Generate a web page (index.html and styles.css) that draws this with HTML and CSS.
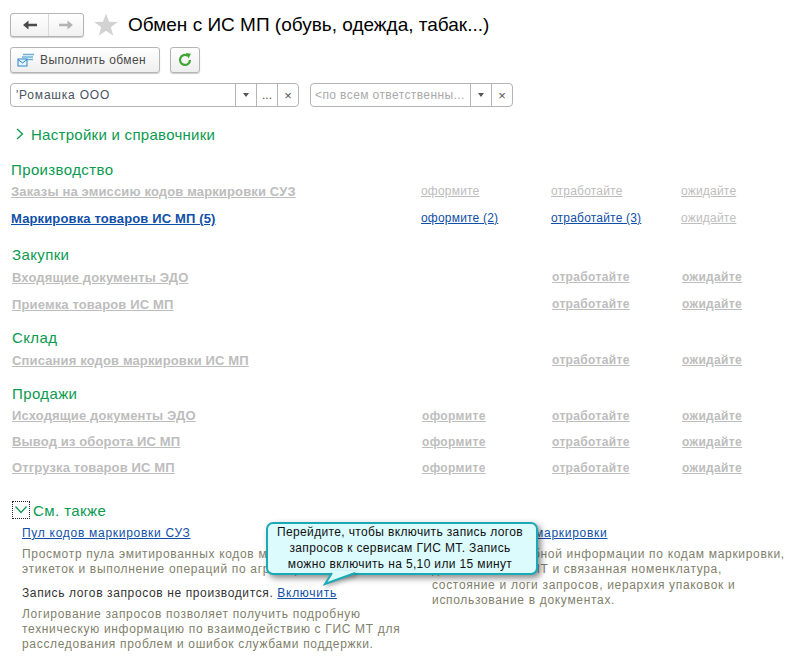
FILE: index.html
```html
<!DOCTYPE html>
<html lang="ru">
<head>
<meta charset="utf-8">
<title>Обмен с ИС МП</title>
<link rel="stylesheet" href="styles.css">
</head>
<body>
<div class="page">
  <header class="titlebar">
    <div class="nav">
      <button class="nav-btn"><svg width="16" height="12" viewBox="0 0 16 12"><path d="M1 6 L6.500 1.500 V4.700 H15 V7.300 H6.500 V10.500 Z" fill="#4a4a4a"/></svg></button>
      <button class="nav-btn"><svg width="16" height="12" viewBox="0 0 16 12"><path d="M15 6 L9.500 1.500 V4.700 H1 V7.300 H9.500 V10.500 Z" fill="#b4b4b4"/></svg></button>
    </div>
    <svg class="star" width="26" height="26" viewBox="0 0 26 26"><path d="M13 1.500 L16 9.800 L24.800 10 L17.800 15.300 L20.300 23.800 L13 18.800 L5.700 23.800 L8.200 15.300 L1.200 10 L10 9.800 Z" fill="#d2d2d2"/></svg>
    <h1>Обмен с ИС МП (обувь, одежда, табак...)</h1>
  </header>

  <div class="commands">
    <button class="btn btn-main">
      <svg width="18" height="17" viewBox="0 0 18 17"><path d="M6 2.500 H17 M5 5 H16 M5 7.500 H16" stroke="#6fb1dc" stroke-width="1.500" fill="none"/><rect x="1" y="7" width="9" height="7" fill="#e8f4fc" stroke="#2e86c8"/><path d="M1 7.500 L5.500 11 L10 7.500" stroke="#2e86c8" fill="none"/></svg>
      <span>Выполнить обмен</span>
    </button>
    <button class="btn btn-icon">
      <svg width="16" height="16" viewBox="0 0 16 16"><path d="M13 8 A5 5 0 1 1 10.800 3.800" stroke="#3fa535" stroke-width="2.200" fill="none"/><path d="M9 1 L14 1.800 L11.500 6.500 Z" fill="#3fa535"/></svg>
    </button>
  </div>

  <div class="filters">
    <div class="field field-org">
      <span class="field-text">'Ромашка ООО</span>
      <span class="cell"><i class="caret"></i></span>
      <span class="cell dots">...</span>
      <span class="cell cross">×</span>
    </div>
    <div class="field field-resp">
      <span class="field-text placeholder">&lt;по всем ответственны...</span>
      <span class="cell"><i class="caret"></i></span>
      <span class="cell cross">×</span>
    </div>
  </div>

  <div class="settings">
    <svg width="10" height="12" viewBox="0 0 10 12"><path d="M2 1 L7.500 6 L2 11" stroke="#0a9a50" stroke-width="1.300" fill="none"/></svg>
    <span>Настройки и справочники</span>
  </div>

  <section class="group first">
    <h2>Производство</h2>
    <div class="row"><a class="name off">Заказы на эмиссию кодов маркировки СУЗ</a><a class="off">оформите</a><a class="off">отработайте</a><a class="off">ожидайте</a></div>
    <div class="row"><a class="name on">Маркировка товаров ИС МП (5)</a><a class="on">оформите (2)</a><a class="on">отработайте (3)</a><a class="off">ожидайте</a></div>
  </section>

  <section class="group shifted purchases">
    <h2>Закупки</h2>
    <div class="row"><a class="name off">Входящие документы ЭДО</a><span></span><a class="off">отработайте</a><a class="off">ожидайте</a></div>
    <div class="row"><a class="name off">Приемка товаров ИС МП</a><span></span><a class="off">отработайте</a><a class="off">ожидайте</a></div>
  </section>

  <section class="group shifted">
    <h2>Склад</h2>
    <div class="row"><a class="name off">Списания кодов маркировки ИС МП</a><span></span><a class="off">отработайте</a><a class="off">ожидайте</a></div>
  </section>

  <section class="group shifted tight">
    <h2>Продажи</h2>
    <div class="row"><a class="name off">Исходящие документы ЭДО</a><a class="off">оформите</a><a class="off">отработайте</a><a class="off">ожидайте</a></div>
    <div class="row"><a class="name off">Вывод из оборота ИС МП</a><a class="off">оформите</a><a class="off">отработайте</a><a class="off">ожидайте</a></div>
    <div class="row"><a class="name off">Отгрузка товаров ИС МП</a><a class="off">оформите</a><a class="off">отработайте</a><a class="off">ожидайте</a></div>
  </section>

  <section class="also">
    <div class="also-head">
      <span class="toggle"><svg width="14" height="10" viewBox="0 0 14 10"><path d="M1.500 1.500 L7 7.500 L12.500 1.500" stroke="#0a9a50" stroke-width="1.300" fill="none"/></svg></span>
      <span>См. также</span>
    </div>
    <div class="also-cols">
      <div class="col-left">
        <a class="link">Пул кодов маркировки СУЗ</a>
        <p class="desc">Просмотр пула эмитированных кодов маркировки, печать<br>этикеток и выполнение операций по агрегации.</p>
        <p class="state">Запись логов запросов не производится. <a class="link">Включить</a></p>
        <p class="desc">Логирование запросов позволяет получить подробную<br>техническую информацию по взаимодействию с ГИС МТ для<br>расследования проблем и ошибок службами поддержки.</p>
      </div>
      <div class="col-right">
        <a class="link">Проверка кодов маркировки</a>
        <p class="desc">Просмотр подробной информации по кодам маркировки,<br>данные из ГИС МТ и связанная номенклатура,<br>состояние и логи запросов, иерархия упаковок и<br>использование в документах.</p>
      </div>
    </div>
  </section>

  <div class="tip">
    <p>Перейдите, чтобы включить запись логов<br>запросов к сервисам ГИС МТ. Запись<br>можно включить на 5,10 или 15 минут</p>
    <svg class="tail" width="32" height="16" viewBox="0 0 32 16"><path d="M8 0 V2 L1 13 L31 2 V0 Z" fill="#dcfbfd"/><path d="M8 2 L1 13 L31 2" fill="none" stroke="#1ba9b5" stroke-width="2"/></svg>
  </div>
</div>
</body>
</html>
```
FILE: styles.css
```css
* { box-sizing: border-box; }
html, body { margin: 0; padding: 0; background: #fff; }
body { width: 796px; height: 660px; overflow: hidden; font-family: "Liberation Sans", Arial, sans-serif; font-size: 12px; }
.page { position: relative; width: 796px; height: 660px; padding: 13px 0 0 10px; }
button { font-family: inherit; margin: 0; padding: 0; cursor: default; }

.titlebar { display: flex; align-items: center; height: 24px; }
.nav { display: flex; width: 74px; height: 24px; border: 1px solid #b4b4b4; border-radius: 3px; box-shadow: 0 1px 1px #ccc; background: linear-gradient(#fff, #f1f1f1); }
.nav-btn { border: 0; background: none; display: flex; align-items: center; justify-content: center; }
.nav-btn:first-child { width: 37px; }
.nav-btn + .nav-btn { flex: 1; border-left: 1px solid #d8d8d8; }
.star { margin-left: 9px; }
h1 { margin: 0 0 0 9px; font-size: 19px; font-weight: 400; color: #000; white-space: nowrap; }

.commands { display: flex; gap: 10px; margin-top: 10px; }
.btn { height: 26px; border: 1px solid #b4b4b4; border-radius: 3px; background: linear-gradient(#fff, #eee); box-shadow: 0 1px 1px #ccc; display: flex; align-items: center; }
.btn-main { width: 150px; padding-left: 6px; color: #4a4a4a; font-size: 12px; letter-spacing: .42px; }
.btn-main span { margin-left: 5px; }
.btn-icon { width: 30px; justify-content: center; }

.filters { display: flex; gap: 11px; margin-top: 10px; }
.field { display: flex; height: 24px; border: 1px solid #b4b4b4; border-radius: 4px; align-items: stretch; }
.field-org { width: 289px; }
.field-resp { width: 203px; }
.field-text { flex: 1; padding-left: 5px; line-height: 22px; color: #4a5260; font-size: 12px; letter-spacing: .8px; white-space: nowrap; overflow: hidden; }
.field-resp .field-text { padding-left: 4px; letter-spacing: .4px; }
.placeholder { color: #aaa !important; }
.cell { width: 21px; border-left: 1px solid #b4b4b4; display: flex; align-items: center; justify-content: center; color: #555; }
.caret { width: 0; height: 0; border-left: 3.500px solid transparent; border-right: 3.500px solid transparent; border-top: 4px solid #555; }
.dots { line-height: 1; }
.cross { font-size: 13px; }

.settings { display: flex; align-items: center; gap: 6px; margin-top: 17px; padding-left: 5px; height: 20px; font-size: 15px; letter-spacing: .28px; color: #0a9a50; white-space: nowrap; }

.group { margin-top: 11px; }
.group.first { margin-top: 17px; padding-left: 1px; }
.group.purchases { margin-top: 13px; }
.group h2 { margin: 0; font-size: 15px; font-weight: 400; color: #0a9a50; line-height: 18px; letter-spacing: .38px; }
.shifted { padding-left: 2px; }
.row { display: grid; grid-template-columns: 410px 130px 130px 1fr; height: 27px; line-height: 27px; white-space: nowrap; }
.first .row { line-height: 25px; }
.tight .row { height: 26px; line-height: 26px; }
.row a { text-decoration: underline; letter-spacing: .2px; justify-self: start; }
.off { color: #bdbdbd; }
.on { color: #0f4fa8; }
.row .name { font-weight: 700; font-size: 13px; letter-spacing: .14px; }
.shifted a:not(.name) { font-weight: 700; letter-spacing: .35px; }

.also { margin-top: 19px; }
.also-head { display: flex; align-items: center; gap: 3px; height: 20px; font-size: 15px; letter-spacing: .42px; color: #0a9a50; padding-left: 2px; }
.toggle { width: 18px; height: 18px; border: 1px dotted #222; display: flex; align-items: center; justify-content: center; }
.also-cols { display: flex; padding-left: 12px; }
.col-left { width: 410px; }
.col-right { width: 360px; }
.link { color: #0f4fa8; text-decoration: underline; letter-spacing: .72px; }
.also-cols > div > .link { display: block; margin-top: 5px; line-height: 16px; }
.desc { margin: 6px 0 0; color: #7f7f6c; line-height: 15px; letter-spacing: .68px; white-space: nowrap; }
.col-right .desc { line-height: 15.300px; }
.state { margin: 9px 0 0; color: #333; line-height: 15px; letter-spacing: .62px; white-space: nowrap; }

.tip { position: absolute; left: 266px; top: 522px; width: 272px; height: 53px; background: #dcfbfd; border: 2px solid #1ba9b5; border-radius: 7px; box-shadow: 3px 3px 6px rgba(40, 40, 40, .55); text-align: center; }
.tip p { margin: 0; padding-right: 4px; font-size: 12px; line-height: 16px; color: #111; letter-spacing: .36px; white-space: nowrap; }
.tail { position: absolute; left: 56px; top: 47px; overflow: visible; filter: drop-shadow(2px 2px 2px rgba(40,40,40,.35)); }
```
